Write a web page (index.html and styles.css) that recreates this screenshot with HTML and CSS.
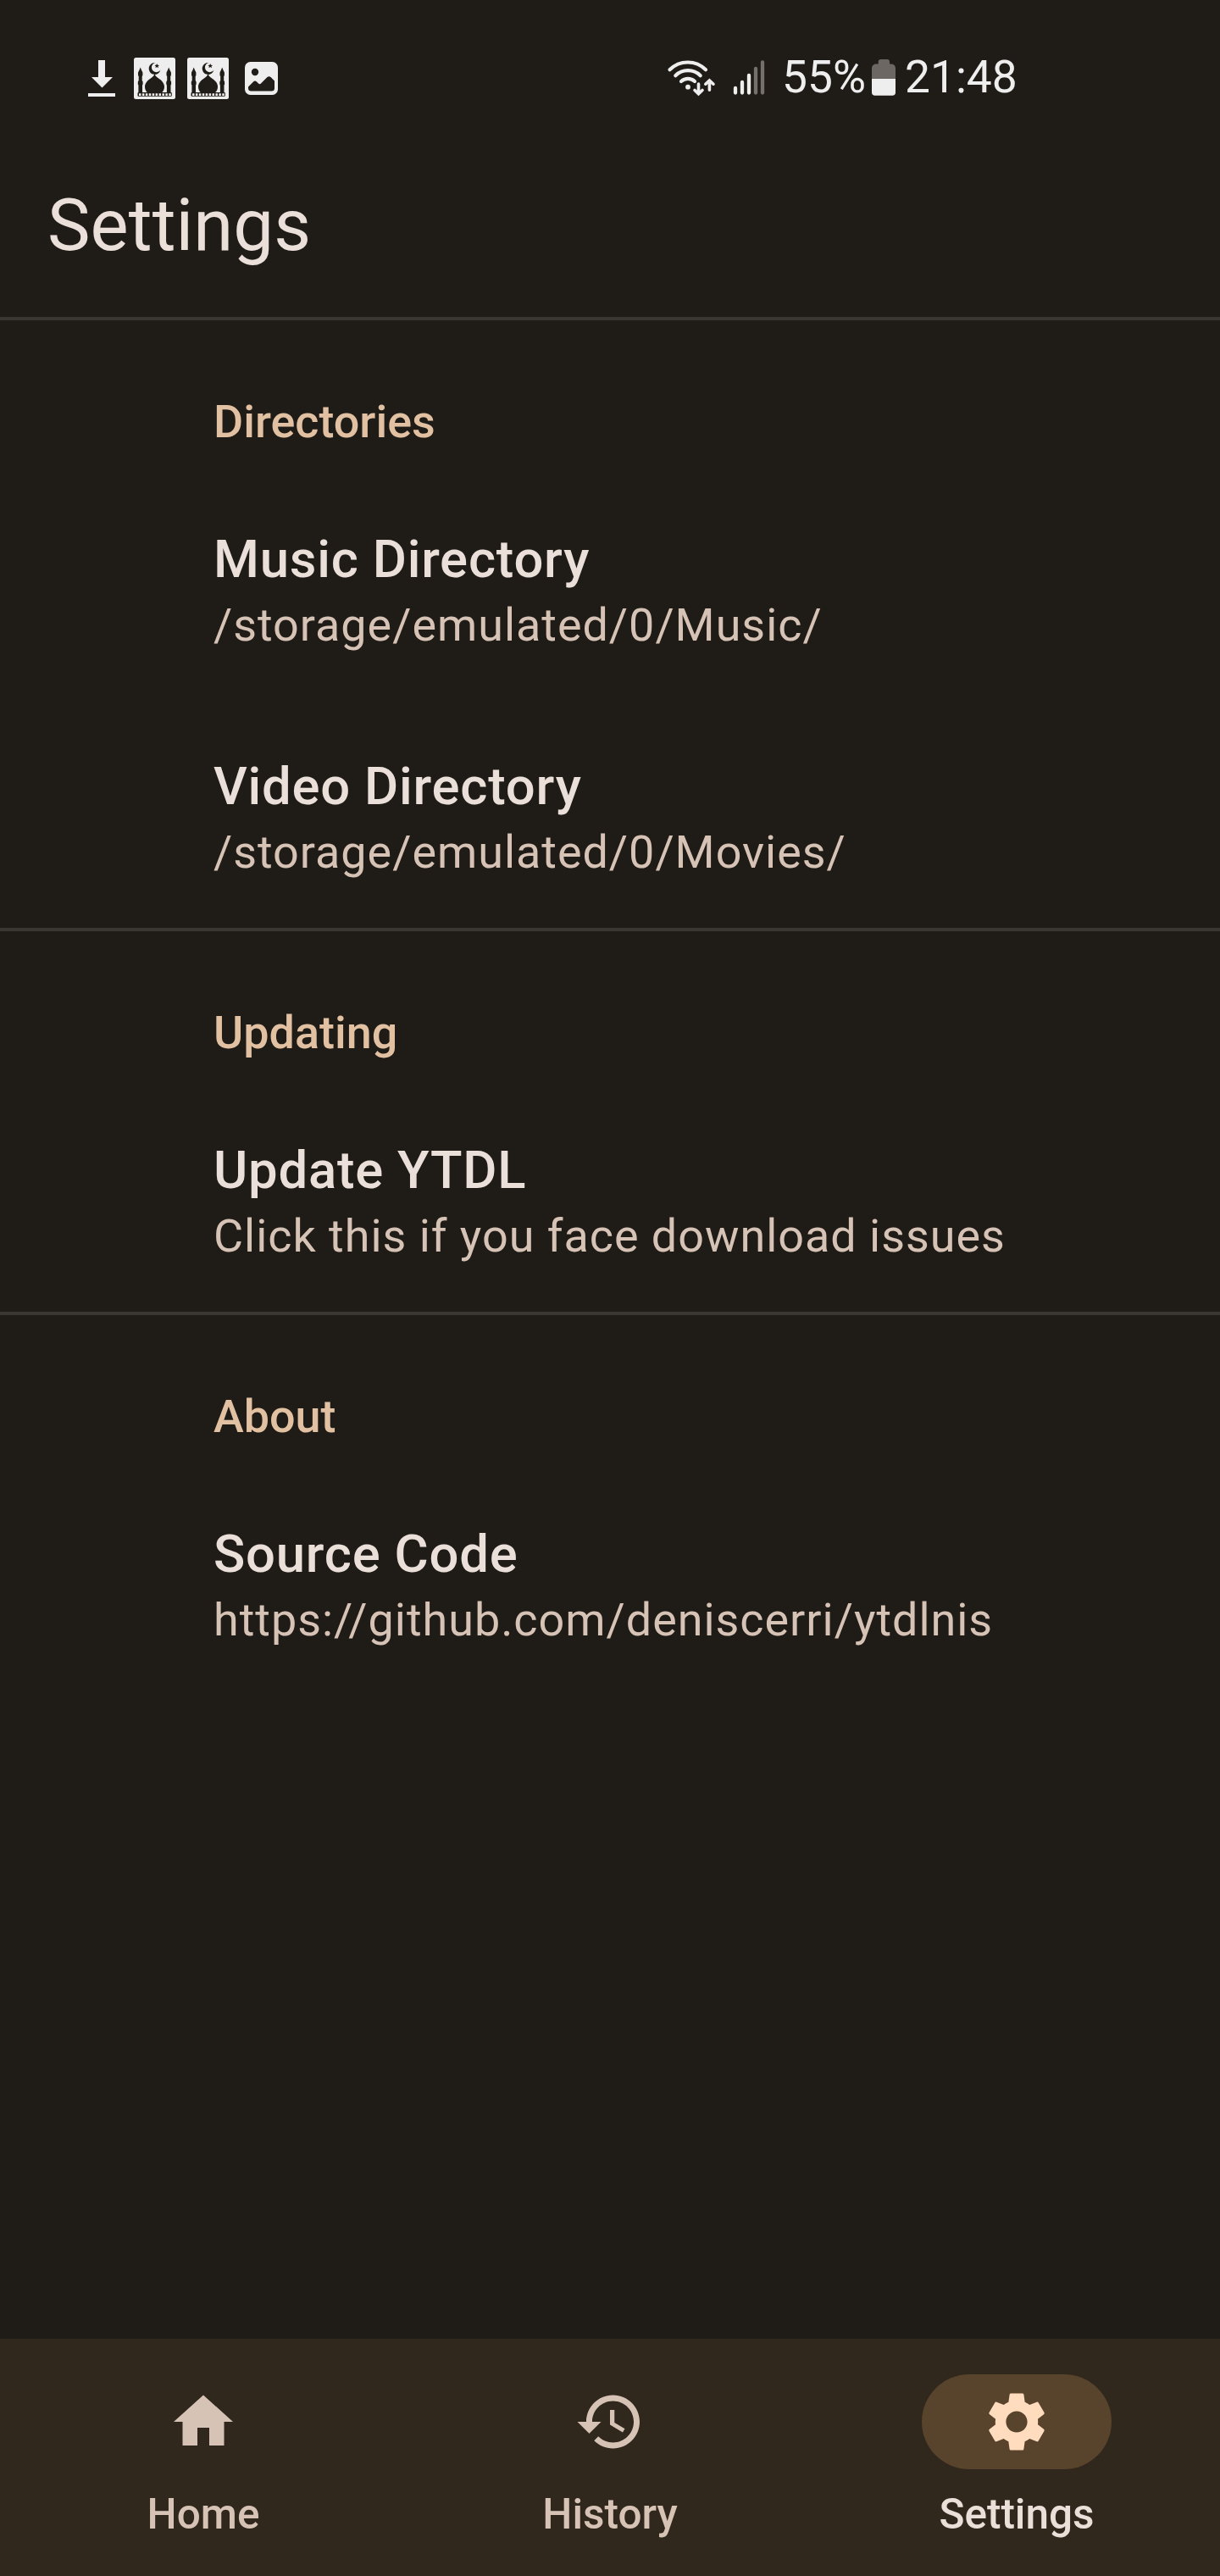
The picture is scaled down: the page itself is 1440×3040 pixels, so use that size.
FILE: index.html
```
<!DOCTYPE html>
<html lang="en">
<head>
<meta charset="utf-8">
<title>Settings</title>
<link rel="stylesheet" href="styles.css">
</head>
<body>
<svg width="0" height="0" class="defs" aria-hidden="true">
  <symbol id="mosque" viewBox="0 -3 49 52">
    <rect width="49" height="49" rx="2.5" fill="#eeeeee"/>
    <g fill="#201c17">
      <path d="M25.8 6A7 7 0 1 0 31.5 14.2A5.6 5.6 0 1 1 25.8 6z"/>
      <path d="M27.2 7l.8 1.8 2 .1-1.500 1.300.5 2-1.800-1.100-1.700 1.100.4-2-1.500-1.300 2-.1z"/>
      <path d="M24.500 18.500c.5 3 2 4.200 5 6.200 4 2.700 6.500 5.800 6.500 9.800 0 3-1.200 5-3 6.800H16c-1.800-1.800-3-3.800-3-6.800 0-4 2.500-7.100 6.500-9.800 3-2 4.500-3.200 5-6.200z"/>
      <path d="M7.700 11.500l1.200 3 1.500 3v3.500l-.7 1v5l.9 1.500v3l-.6 1v9.500H5.400V32.500l-.6-1v-3l.9-1.500v-5L5 21v-3.500l1.500-3zM41.200 11.500l1.200 3 1.500 3v3.500l-.7 1v5l.9 1.500v3l-.6 1v9.500h-4.600V32.500l-.6-1v-3l.9-1.500v-5l-.7-1v-3.500l1.500-3z"/>
      <rect x="4.500" y="41" width="40.300" height="4.800" rx="1"/>
    </g>
    <path d="M6 43.600H44" stroke="#eeeeee" stroke-width="2.800" stroke-dasharray="2.500 1.420"/>
  </symbol>
</svg>
<div class="screen">
  <div class="status">
    <svg class="st-download" viewBox="0 0 32 52" width="32" height="52"><path d="M12 6h8v20h9L16.500 38.500 4 26h8zM0 45h32v4H0z" fill="#eeeeee"/></svg>
    <svg class="st-mosque" width="49" height="52"><use href="#mosque"/></svg>
    <svg class="st-mosque" width="49" height="52"><use href="#mosque"/></svg>
    <svg class="st-image" viewBox="0 -8 39 52" width="39" height="52">
      <rect width="39" height="39" rx="6.500" fill="#eeeeee"/>
      <g fill="#201c17"><circle cx="12" cy="12" r="4.200"/><path d="M4 29.500l6-6q2-2 4 0l1.800 1.800q1.700 1.700 3.400 0l7-7q2.300-2.200 4.600 0l4.200 4.200V31q0 3.500-3.500 3.500h-24Q4 34.500 4 31z"/></g>
    </svg>
    <svg class="st-wifi" viewBox="786 65 60 52" width="60" height="52" fill="none" stroke="#eeeeee" stroke-width="4.200" stroke-linecap="round">
      <path d="M790.500 82.300A30 30 0 0 1 833 82.300M797.300 89.200A21 21 0 0 1 826.700 89.200M804 96A12 12 0 0 1 820 96"/>
      <circle cx="812" cy="102.700" r="2.900" fill="#eeeeee" stroke="none"/>
      <path d="M824.500 99v11.500M820 106.500l4.500 4.200 4.500-4.200M837.400 106.300V95M832.800 99.200l4.600-4.300 4.600 4.300" stroke-width="3.600"/>
    </svg>
    <svg class="st-signal" viewBox="865 65 38 52" width="38" height="52" stroke-width="4.300" stroke-linecap="round">
      <path d="M868 104v5.500M876 97v12.500M884 89v20.500" stroke="#eeeeee"/>
      <path d="M892 81v28.500M900 73.500v36" stroke="#75706c"/>
    </svg>
    <span class="battery-text">55%</span>
    <svg class="st-battery" viewBox="1029 65 28 52" width="28" height="52">
      <path d="M1036.700 75.500V73q0-3 3-3h7.300q3 0 3 3v2.500h1.500q5.500 0 5.500 5.500v12h-28V81q0-5.500 5.500-5.500z" fill="#6c6763"/>
      <path d="M1029 93h28v16q0 3.800-3.800 3.800h-20.400q-3.800 0-3.800-3.800z" fill="#eeeeee"/>
    </svg>
    <span class="clock">21:48</span>
  </div>
  <header class="toolbar"><h1>Settings</h1></header>
  <main>
    <section>
      <h2>Directories</h2>
      <div class="pref"><div class="name">Music Directory</div><div class="summary">/storage/emulated/0/Music/</div></div>
      <div class="pref"><div class="name">Video Directory</div><div class="summary">/storage/emulated/0/Movies/</div></div>
    </section>
    <section>
      <h2>Updating</h2>
      <div class="pref"><div class="name">Update YTDL</div><div class="summary">Click this if you face download issues</div></div>
    </section>
    <section>
      <h2>About</h2>
      <div class="pref"><div class="name">Source Code</div><div class="summary">https://github.com/deniscerri/ytdlnis</div></div>
    </section>
  </main>
  <nav>
    <a class="tab"><span class="pill"><svg viewBox="0 0 24 24"><path d="M10 20v-6h4v6h5v-8h3L12 3 2 12h3v8z"/></svg></span><span>Home</span></a>
    <a class="tab"><span class="pill"><svg viewBox="0 0 24 24"><path d="M13 3c-4.970 0-9 4.030-9 9H1l3.890 3.890.07.14L9 12H6c0-3.870 3.130-7 7-7s7 3.130 7 7-3.130 7-7 7c-1.930 0-3.680-.79-4.940-2.060l-1.420 1.420C8.270 19.990 10.510 21 13 21c4.970 0 9-4.030 9-9s-4.030-9-9-9zm-1 5v5l4.280 2.540.72-1.210-3.500-2.080V8H12z"/></svg></span><span>History</span></a>
    <a class="tab active"><span class="pill"><svg viewBox="0 0 24 24"><path d="M19.140 12.940c.04-.3.06-.61.06-.94 0-.32-.02-.64-.07-.94l2.030-1.580c.18-.14.23-.41.12-.61l-1.920-3.320c-.12-.22-.37-.29-.59-.22l-2.390.96c-.5-.38-1.030-.7-1.620-.94l-.36-2.540c-.04-.24-.24-.41-.48-.41h-3.840c-.24 0-.43.17-.47.41l-.36 2.540c-.59.24-1.130.57-1.620.94l-2.390-.96c-.22-.08-.47 0-.59.22L2.740 8.870c-.12.21-.08.47.12.61l2.030 1.580c-.05.3-.09.63-.09.94s.02.64.07.94l-2.030 1.580c-.18.14-.23.41-.12.61l1.920 3.320c.12.22.37.29.59.22l2.390-.96c.5.38 1.030.7 1.620.94l.36 2.540c.05.24.24.41.48.41h3.840c.24 0 .44-.17.47-.41l.36-2.540c.59-.24 1.130-.56 1.620-.94l2.390.96c.22.08.47 0 .59-.22l1.920-3.320c.12-.22.07-.47-.12-.61l-2.010-1.580zM12 15.600c-1.980 0-3.600-1.620-3.600-3.600s1.620-3.600 3.600-3.600 3.600 1.620 3.600 3.600-1.620 3.600-3.600 3.600z"/></svg></span><span>Settings</span></a>
  </nav>
</div>
</body>
</html>
```
FILE: styles.css
```
* { box-sizing: border-box; margin: 0; }
body { background: #1f1c17; color: #ebdfda; font-family: Roboto, sans-serif; }
svg { display: block; flex: none; }
.defs { display: none; }
.screen { height: 3040px; width: 1440px; display: flex; flex-direction: column; }
.status { height: 140px; padding: 42px 0 0 104px; display: flex; align-items: center; font-size: 53.3px; line-height: 98px; color: #eeeeee; }
.st-mosque { margin-left: 14px; }
.st-download + .st-mosque { margin-left: 22px; }
.st-image { margin-left: 19px; }
.st-wifi { margin-left: 458px; }
.st-signal { margin-left: 19px; }
.battery-text { margin-left: 20px; width: 106px; }
.clock { margin-left: 11px; }
.toolbar { height: 234px; padding: 76px 56px 0; }
.toolbar h1 { font-size: 85px; font-weight: 400; line-height: 100px; letter-spacing: 0.1px; }
section { border-top: 4px solid #3a3631; padding: 88px 72px 0 252px; }
h2 { font-size: 53.9px; font-weight: 500; line-height: 64px; margin-bottom: 29px; color: #e2c1a3; }
.pref { height: 268px; padding-top: 65px; white-space: nowrap; }
.name { font-size: 61.6px; font-weight: 500; line-height: 72px; letter-spacing: 0.78px; }
.summary { margin-top: 10px; font-size: 53.9px; line-height: 64px; letter-spacing: 0.99px; color: #d6c3b6; }
nav { margin-top: auto; height: 280px; padding-top: 42px; background: #30281c; display: grid; grid-template-columns: repeat(3, 1fr); }
.tab { display: flex; flex-direction: column; align-items: center; gap: 24px; font-size: 49.5px; font-weight: 500; line-height: 58px; color: #d6c3b6; }
.pill { width: 224px; height: 112px; border-radius: 56px; display: flex; align-items: center; justify-content: center; }
.pill svg { width: 84px; height: 84px; fill: currentColor; }
.active { color: #ebdfda; }
.active .pill { background: #58432c; color: #ffdcbe; }
```
